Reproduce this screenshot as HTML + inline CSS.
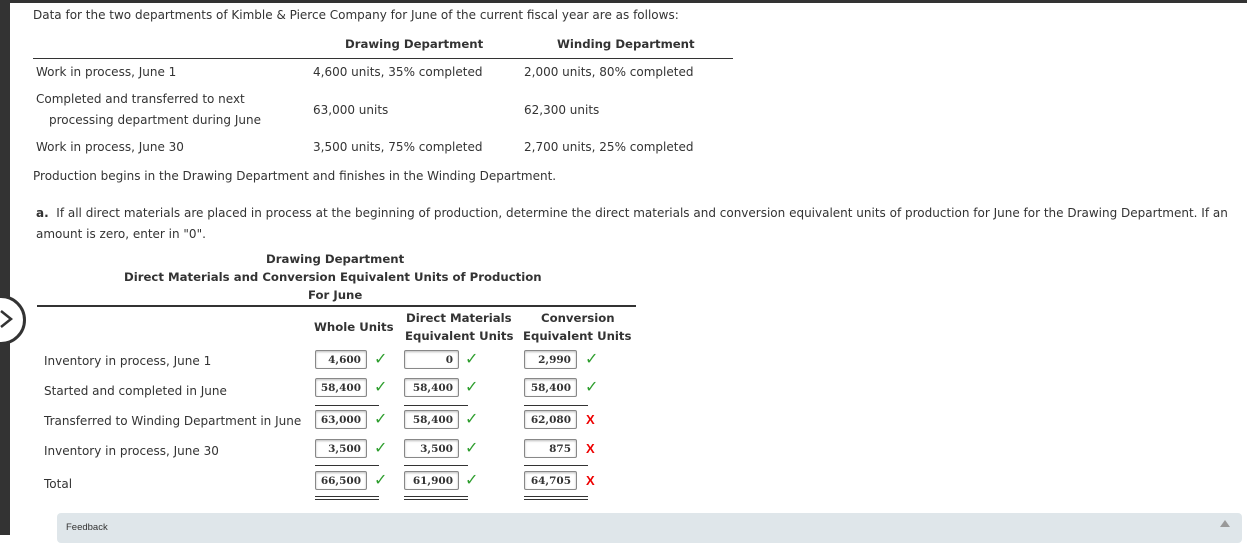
<!DOCTYPE html><html><head><style>
body{margin:0;width:1247px;height:535px;overflow:hidden;background:#fff;font-family:"DejaVu Sans","Liberation Sans",sans-serif;font-size:12px;color:#333;position:relative}
div,span{position:absolute;white-space:nowrap}
.b{font-weight:bold;font-size:11.7px}
.in{height:19px;border:1px solid #888;border-radius:2px;box-shadow:inset 0 1px 2px #bbb;text-align:right;line-height:19px;font-family:"DejaVu Serif","Liberation Serif",serif;font-weight:bold;font-size:10.5px;padding-right:5px;box-sizing:border-box;color:#333}
.ck{color:#2e9e2e;font-size:16px;font-weight:bold;font-family:"DejaVu Sans",sans-serif}
.x{color:#e00;font-size:13px;font-weight:bold;font-family:"Liberation Sans",sans-serif}
.hl{height:0;border-top:1px solid #333}
</style></head><body>
<div style="left:0;top:0;width:1247px;height:3px;background:#333"></div>
<div style="left:0;top:0;width:10px;height:535px;background:#333"></div>
<div style="left:-24px;top:295px;width:44px;height:44px;border:3px solid #333;border-radius:50%;background:#fff"></div>
<svg style="position:absolute;left:0;top:308px" width="14" height="22"><path d="M1 3 L11 11 L1 19" fill="none" stroke="#333" stroke-width="2.5"/></svg>

<div style="left:33px;top:8px">Data for the two departments of Kimble &amp; Pierce Company for June of the current fiscal year are as follows:</div>
<div class="b" style="left:345px;top:37px">Drawing Department</div>
<div class="b" style="left:557px;top:37px">Winding Department</div>
<div class="hl" style="left:33px;top:58px;width:700px;border-top-width:1.5px"></div>
<div style="left:36px;top:65px">Work in process, June 1</div>
<div style="left:313px;top:65px">4,600 units, 35% completed</div>
<div style="left:524px;top:65px">2,000 units, 80% completed</div>
<div style="left:36px;top:92px">Completed and transferred to next</div>
<div style="left:49px;top:113px">processing department during June</div>
<div style="left:313px;top:103px">63,000 units</div>
<div style="left:524px;top:103px">62,300 units</div>
<div style="left:36px;top:140px">Work in process, June 30</div>
<div style="left:313px;top:140px">3,500 units, 75% completed</div>
<div style="left:524px;top:140px">2,700 units, 25% completed</div>
<div style="left:33px;top:169px">Production begins in the Drawing Department and finishes in the Winding Department.</div>
<div style="left:36px;top:206px"><b>a.</b>&nbsp; If all direct materials are placed in process at the beginning of production, determine the direct materials and conversion equivalent units of production for June for the Drawing Department. If an</div>
<div style="left:36px;top:227px">amount is zero, enter in "0".</div>
<div class="b" style="left:266px;top:252px">Drawing Department</div>
<div class="b" style="left:124px;top:270px">Direct Materials and Conversion Equivalent Units of Production</div>
<div class="b" style="left:308px;top:288px">For June</div>
<div class="hl" style="left:37px;top:305px;width:599px;border-top-width:2px"></div>
<div class="b" style="left:314px;top:320px">Whole Units</div>
<div class="b" style="left:406px;top:311px">Direct Materials</div>
<div class="b" style="left:405px;top:329px">Equivalent Units</div>
<div class="b" style="left:541px;top:311px">Conversion</div>
<div class="b" style="left:523px;top:329px">Equivalent Units</div>

<div style="left:44px;top:354px">Inventory in process, June 1</div>
<div style="left:44px;top:384px">Started and completed in June</div>
<div style="left:44px;top:414px">Transferred to Winding Department in June</div>
<div style="left:44px;top:444px">Inventory in process, June 30</div>
<div style="left:44px;top:477px">Total</div>

<div class="in" style="left:315px;top:350px;width:52px">4,600</div><span class="ck" style="left:374px;top:349px">✓</span>
<div class="in" style="left:404px;top:350px;width:55px">0</div><span class="ck" style="left:465px;top:349px">✓</span>
<div class="in" style="left:524px;top:350px;width:53px">2,990</div><span class="ck" style="left:585px;top:349px">✓</span>

<div class="in" style="left:315px;top:378px;width:52px">58,400</div><span class="ck" style="left:374px;top:377px">✓</span>
<div class="in" style="left:404px;top:378px;width:55px">58,400</div><span class="ck" style="left:465px;top:377px">✓</span>
<div class="in" style="left:524px;top:378px;width:53px">58,400</div><span class="ck" style="left:585px;top:377px">✓</span>
<div class="hl" style="left:315px;top:405px;width:64px"></div><div class="hl" style="left:404px;top:405px;width:64px"></div><div class="hl" style="left:524px;top:405px;width:64px"></div>

<div class="in" style="left:315px;top:410px;width:52px">63,000</div><span class="ck" style="left:374px;top:409px">✓</span>
<div class="in" style="left:404px;top:410px;width:55px">58,400</div><span class="ck" style="left:465px;top:409px">✓</span>
<div class="in" style="left:524px;top:410px;width:53px">62,080</div><span class="x" style="left:586px;top:412px">X</span>

<div class="in" style="left:315px;top:439px;width:52px">3,500</div><span class="ck" style="left:374px;top:438px">✓</span>
<div class="in" style="left:404px;top:439px;width:55px">3,500</div><span class="ck" style="left:465px;top:438px">✓</span>
<div class="in" style="left:524px;top:439px;width:53px">875</div><span class="x" style="left:586px;top:441px">X</span>
<div class="hl" style="left:315px;top:465px;width:64px"></div><div class="hl" style="left:404px;top:465px;width:64px"></div><div class="hl" style="left:524px;top:465px;width:64px"></div>

<div class="in" style="left:315px;top:471px;width:52px">66,500</div><span class="ck" style="left:374px;top:470px">✓</span>
<div class="in" style="left:404px;top:471px;width:55px">61,900</div><span class="ck" style="left:465px;top:470px">✓</span>
<div class="in" style="left:524px;top:471px;width:53px">64,705</div><span class="x" style="left:586px;top:473px">X</span>
<div style="left:315px;top:496px;width:64px;height:2px;border-top:1px solid #333;border-bottom:1px solid #333"></div>
<div style="left:404px;top:496px;width:64px;height:2px;border-top:1px solid #333;border-bottom:1px solid #333"></div>
<div style="left:524px;top:496px;width:64px;height:2px;border-top:1px solid #333;border-bottom:1px solid #333"></div>

<div style="left:57px;top:513px;width:1185px;height:30px;background:#dfe6ea;border-radius:4px"></div>
<div style="left:66px;top:522px;font-family:'Liberation Sans',sans-serif;font-size:9.5px;color:#333">Feedback</div>
<svg style="position:absolute;left:1220px;top:520px" width="10" height="8"><path d="M0 7 L5 0 L10 7Z" fill="#999"/></svg>
</body></html>
